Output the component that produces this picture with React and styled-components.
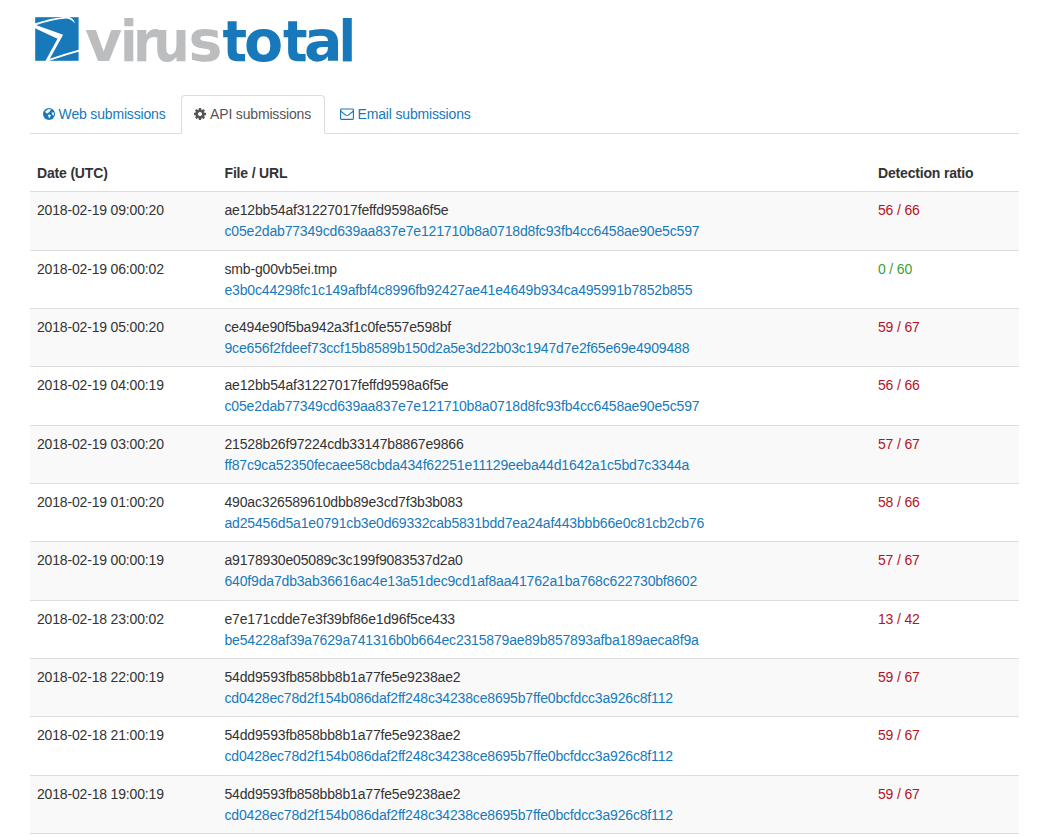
import React from 'react';
import styled, { createGlobalStyle } from 'styled-components';

const GlobalStyle = createGlobalStyle`
  * { box-sizing: border-box; }
  html, body { height: 100%; overflow: hidden; }
  body {
    margin: 0;
    background: #fff;
    color: #333;
    font-family: "Liberation Sans", Arial, sans-serif;
    font-size: 14px;
    letter-spacing: -0.171px;
    line-height: 21px;
  }
`;

const Page = styled.div`
  width: 1019px;
  height: 836px;
  padding: 8px 0 0 29.5px;
  overflow: hidden;
`;

const Logo = styled.svg`
  display: block;
  width: 330px;
  height: 68px;
  overflow: visible;
  letter-spacing: 0;
`;

const Wide = styled.tspan`
  font-family: "DejaVu Sans", sans-serif;
  font-stretch: normal;
`;

const Narrow = styled.tspan`
  font-family: "DejaVu Sans Condensed", "DejaVu Sans", sans-serif;
  font-stretch: condensed;
`;

const Tabs = styled.nav`
  display: flex;
  height: 58px;
  padding-top: 19px;
  border-bottom: 1px solid #ddd;
`;

const Tab = styled.a`
  display: flex;
  align-items: center;
  gap: 3.6px;
  height: 39px;
  margin-right: 2px;
  padding: 0 12.5px;
  border: 1px solid ${({ $active }) => ($active ? '#ddd' : 'transparent')};
  border-bottom-color: ${({ $active }) => ($active ? '#fff' : 'transparent')};
  border-radius: 4px 4px 0 0;
  background: ${({ $active }) => ($active ? '#fff' : 'transparent')};
  color: ${({ $active }) => ($active ? '#555' : '#1779ba')};
  white-space: nowrap;
`;

const Icon = styled.svg`
  display: block;
  flex: none;
  width: ${({ $w }) => $w || 12}px;
  height: 12px;
  margin-bottom: 1.5px;
`;

const Table = styled.div`
  margin-top: 20px;
`;

const Row = styled.div`
  display: grid;
  grid-template-columns: 187.5px 653.5px 1fr;
  height: 58.33px;
  padding: 8px 7.5px;
  border-top: 1px solid #ddd;
  background: ${({ $shaded }) => ($shaded ? '#f9f9f9' : '#fff')};
`;

const HeadRow = styled(Row)`
  height: 37.4px;
  border-top-color: transparent;
  font-weight: 700;
`;

const Hash = styled.a`
  display: block;
  color: #1779ba;
`;

const Ratio = styled.span`
  color: ${({ $clean }) => ($clean ? '#3a9f2f' : '#b5121f')};
`;

const rows = [
  ['2018-02-19 09:00:20', 'ae12bb54af31227017feffd9598a6f5e', 'c05e2dab77349cd639aa837e7e121710b8a0718d8fc93fb4cc6458ae90e5c597', '56 / 66'],
  ['2018-02-19 06:00:02', 'smb-g00vb5ei.tmp', 'e3b0c44298fc1c149afbf4c8996fb92427ae41e4649b934ca495991b7852b855', '0 / 60'],
  ['2018-02-19 05:00:20', 'ce494e90f5ba942a3f1c0fe557e598bf', '9ce656f2fdeef73ccf15b8589b150d2a5e3d22b03c1947d7e2f65e69e4909488', '59 / 67'],
  ['2018-02-19 04:00:19', 'ae12bb54af31227017feffd9598a6f5e', 'c05e2dab77349cd639aa837e7e121710b8a0718d8fc93fb4cc6458ae90e5c597', '56 / 66'],
  ['2018-02-19 03:00:20', '21528b26f97224cdb33147b8867e9866', 'ff87c9ca52350fecaee58cbda434f62251e11129eeba44d1642a1c5bd7c3344a', '57 / 67'],
  ['2018-02-19 01:00:20', '490ac326589610dbb89e3cd7f3b3b083', 'ad25456d5a1e0791cb3e0d69332cab5831bdd7ea24af443bbb66e0c81cb2cb76', '58 / 66'],
  ['2018-02-19 00:00:19', 'a9178930e05089c3c199f9083537d2a0', '640f9da7db3ab36616ac4e13a51dec9cd1af8aa41762a1ba768c622730bf8602', '57 / 67'],
  ['2018-02-18 23:00:02', 'e7e171cdde7e3f39bf86e1d96f5ce433', 'be54228af39a7629a741316b0b664ec2315879ae89b857893afba189aeca8f9a', '13 / 42'],
  ['2018-02-18 22:00:19', '54dd9593fb858bb8b1a77fe5e9238ae2', 'cd0428ec78d2f154b086daf2ff248c34238ce8695b7ffe0bcfdcc3a926c8f112', '59 / 67'],
  ['2018-02-18 21:00:19', '54dd9593fb858bb8b1a77fe5e9238ae2', 'cd0428ec78d2f154b086daf2ff248c34238ce8695b7ffe0bcfdcc3a926c8f112', '59 / 67'],
  ['2018-02-18 19:00:19', '54dd9593fb858bb8b1a77fe5e9238ae2', 'cd0428ec78d2f154b086daf2ff248c34238ce8695b7ffe0bcfdcc3a926c8f112', '59 / 67'],
  ['', '', '', ''],
];

const COG = 'M1024 896q0-106-75-181t-181-75-181 75-75 181 75 181 181 75 181-75 75-181zm512-109v222q0 12-8 23t-20 13l-185 28q-19 54-39 91 35 50 107 138 10 12 10 25t-9 23q-27 37-99 108t-94 71q-12 0-26-9l-138-108q-44 23-91 38-16 136-29 186-7 28-36 28h-222q-14 0-24.5-8.5t-11.5-21.5l-28-184q-49-16-90-37l-141 107q-10 9-25 9-14 0-25-11-126-114-165-168-7-10-7-23 0-12 8-23 15-21 51-66.5t54-70.5q-27-50-41-99l-183-27q-13-2-21-12.5t-8-23.5v-222q0-12 8-23t19-13l186-28q14-46 39-92-40-57-107-138-10-12-10-24 0-10 9-23 26-36 98.5-107.5t94.5-71.5q13 0 26 10l138 107q44-23 91-38 16-136 29-186 7-28 36-28h222q14 0 24.5 8.5t11.5 21.5l28 184q49 16 90 37l142-107q9-9 24-9 13 0 25 10 129 119 165 170 7 8 7 22 0 12-8 23-15 21-51 66.5t-54 70.5q26 50 41 98l183 28q13 2 21 12.5t8 23.5z';

export default function App() {
  return (
    <Page>
      <GlobalStyle />
      <Logo viewBox="29.5 8 330 68">
        <rect x="34.7" y="17.2" width="43.4" height="43.6" fill="#1779ba" />
        <g fill="#fff">
          <path d="M34 24.6 L62.6 34.8 L47.8 61.4 L44.6 61.4 L57 38.8 L34 28 Z" />
          <path d="M34 23.6 L50 19 L66 16.4 Q73.4 17.4 74.4 23.4 Q71 19.4 66 18.6 Q52 19.4 34 25.8 Z" />
          <path d="M45.5 60 Q62 54 79 49.4 L79 51.6 Q65 55.4 47 61.6 Z" />
        </g>
        <text y="60.5" fontWeight="700" fontSize="57" fill="#bcbdbf">
          <Wide x="84.5">v</Wide><Narrow x="119.4 132.4 152.7">iru</Narrow><Wide x="188">s</Wide>
        </text>
        <text y="60.5" fontWeight="700" fontSize="57" fill="#1779ba">
          <Narrow x="222">t</Narrow><Wide x="243.5">o</Wide><Narrow x="282.6">t</Narrow><Wide x="303.5">a</Wide><Narrow x="338">l</Narrow>
        </text>
      </Logo>
      <Tabs>
        <Tab>
          <Icon viewBox="0 0 12 12">
            <circle cx="6" cy="6" r="6" fill="currentColor" />
            <path d="M5.6 .9 L8.2 1.5 L7.4 2.6 L6.6 3.2 L7 4 L5.4 4.6 L4.6 5.6 L3 5 L2.2 3.6 L3.6 2.2 Z M6.2 6.4 L8 7.4 L7.2 8.8 L6 10.8 L5.6 8.6 L4.8 7.2 Z M8.6 4.8 L10.4 4 L11 6.4 L10.2 7.8 L9.2 6.6 Z" fill="#fff" />
          </Icon>
          Web submissions
        </Tab>
        <Tab $active>
          <Icon viewBox="0 128 1536 1536"><path d={COG} fill="currentColor" /></Icon>
          API submissions
        </Tab>
        <Tab>
          <Icon $w={14} viewBox="0 0 14 12">
            <g fill="none" stroke="currentColor" strokeWidth="1.15">
              <rect x=".6" y="1" width="12.8" height="10.4" rx=".8" />
              <path d="M.8 3.2 L6 7.4 Q7 8.1 8 7.4 L13.2 3.2" />
            </g>
          </Icon>
          Email submissions
        </Tab>
      </Tabs>
      <Table>
        <HeadRow>
          <span>Date (UTC)</span>
          <span>File / URL</span>
          <span>Detection ratio</span>
        </HeadRow>
        {rows.map(([date, name, hash, ratio], i) => (
          <Row key={i} $shaded={i % 2 === 0}>
            <span>{date}</span>
            <div>
              {name}
              <Hash>{hash}</Hash>
            </div>
            <Ratio $clean={ratio.startsWith('0')}>{ratio}</Ratio>
          </Row>
        ))}
      </Table>
    </Page>
  );
}
